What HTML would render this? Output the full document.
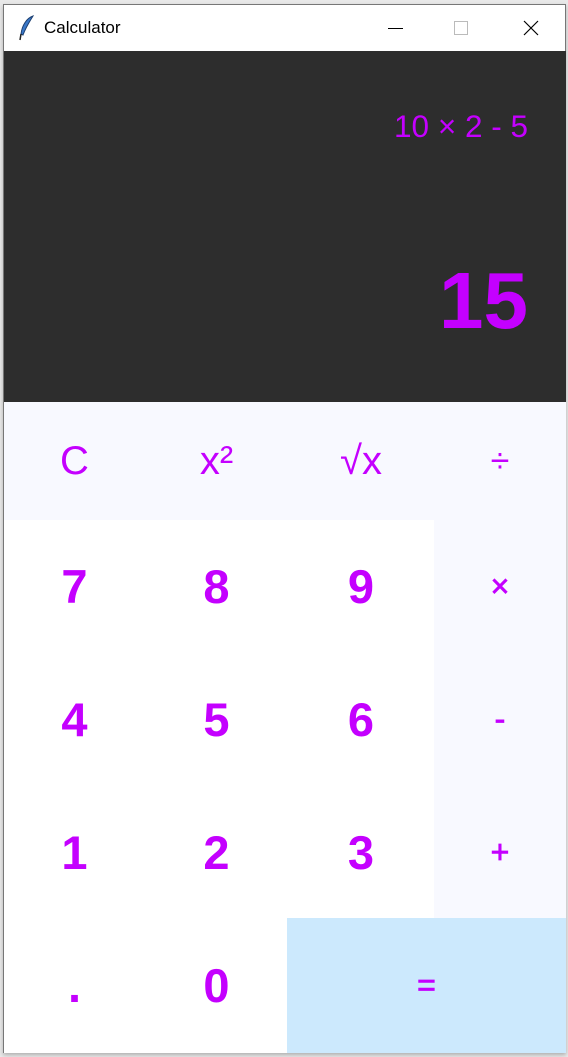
<!DOCTYPE html>
<html><head><meta charset="utf-8"><style>
*{margin:0;padding:0;box-sizing:border-box}
body{width:568px;height:1057px;background:#e9e9e9;position:relative;overflow:hidden;font-family:"Liberation Sans",Arial,sans-serif}
.win{position:absolute;left:3px;top:4px;width:563px;height:1049px;background:#fff;border:1px solid #777;border-bottom:none;box-shadow:0 2px 4px rgba(0,0,0,.25)}
.title{position:absolute;left:0;top:0;width:100%;height:46px;background:#fff}
.title .t{position:absolute;left:40px;top:13px;font-size:17px;color:#000}
.disp{position:absolute;left:0;top:46px;width:562px;height:352px;background:#2d2d2d}
.k{position:absolute;display:flex;align-items:center;justify-content:center;color:#c400ff}
.n{font-weight:bold;font-size:47px}
.o{font-size:40px}
.op{font-size:32px;-webkit-text-stroke:0.8px #c400ff}
</style></head><body>
<div class="win">
 <div class="title">
  <svg style="position:absolute;left:14px;top:10px" width="18" height="26" viewBox="0 0 18 26"><path d="M15 1 C9 3 4 10 3 19 L5 20 C8 12 12 6 15 1Z" fill="#3a78c8" stroke="#1d3f70" stroke-width="1"/><path d="M3 19 L2 25" stroke="#222" stroke-width="1.5"/></svg>
  <span class="t">Calculator</span>
  <div style="position:absolute;left:384px;top:23px;width:15px;height:1px;background:#000"></div>
  <div style="position:absolute;left:450px;top:16px;width:14px;height:14px;border:1px solid #bbb"></div>
  <svg style="position:absolute;left:519px;top:15px" width="16" height="16" viewBox="0 0 16 16"><path d="M1 1L15 15M15 1L1 15" stroke="#000" stroke-width="1.2"/></svg>
 </div>
 <div class="disp">
  <div style="position:absolute;right:38px;top:57px;font-size:31.5px;color:#c400ff;white-space:nowrap">10 × 2 - 5</div>
  <div style="position:absolute;right:38px;top:204px;font-size:80px;font-weight:bold;color:#c400ff;white-space:nowrap">15</div>
 </div>
</div>
<div style="position:absolute;left:4px;top:402px;width:562px;height:118px;background:#f8f9ff"></div>
<div style="position:absolute;left:434px;top:520px;width:132px;height:398px;background:#f8f9ff"></div>
<div style="position:absolute;left:287px;top:918px;width:279px;height:135px;background:#cce9fd"></div>

<div class="k o" style="left:4px;top:402px;width:141px;height:118px">C</div>
<div class="k o" style="left:145px;top:402px;width:143px;height:118px">x²</div>
<div class="k o" style="left:288px;top:402px;width:146px;height:118px">√x</div>
<div class="k" style="left:434px;top:402px;width:132px;height:118px;font-size:34px">÷</div>

<div class="k n" style="left:4px;top:520px;width:141px;height:133px">7</div>
<div class="k n" style="left:145px;top:520px;width:143px;height:133px">8</div>
<div class="k n" style="left:288px;top:520px;width:146px;height:133px">9</div>
<div class="k op" style="left:434px;top:520px;width:132px;height:133px">×</div>

<div class="k n" style="left:4px;top:653px;width:141px;height:133px">4</div>
<div class="k n" style="left:145px;top:653px;width:143px;height:133px">5</div>
<div class="k n" style="left:288px;top:653px;width:146px;height:133px">6</div>
<div class="k op" style="left:434px;top:653px;width:132px;height:133px">-</div>

<div class="k n" style="left:4px;top:786px;width:141px;height:133px">1</div>
<div class="k n" style="left:145px;top:786px;width:143px;height:133px">2</div>
<div class="k n" style="left:288px;top:786px;width:146px;height:133px">3</div>
<div class="k op" style="left:434px;top:786px;width:132px;height:133px">+</div>

<div class="k n" style="left:4px;top:919px;width:141px;height:133px">.</div>
<div class="k n" style="left:145px;top:919px;width:143px;height:133px">0</div>
<div class="k op" style="left:287px;top:919px;width:279px;height:133px">=</div>
</body></html>
